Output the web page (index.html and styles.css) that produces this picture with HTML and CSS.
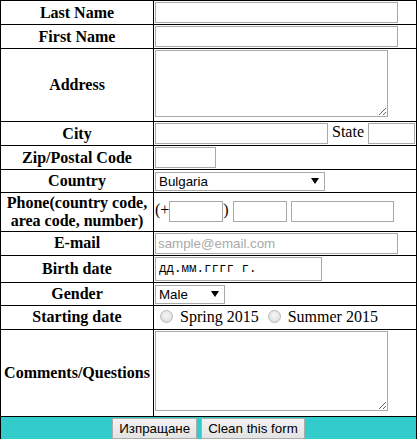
FILE: index.html
```html
<!DOCTYPE html>
<html lang="bg">
<head>
<meta charset="utf-8">
<title>Form</title>
<link rel="stylesheet" href="styles.css">
</head>
<body>
<form class="reg-form">
<table class="form-table">
  <tr class="row-24">
    <td class="label">Last Name</td>
    <td class="field"><input class="ctl w243" type="text"></td>
  </tr>
  <tr class="row-24">
    <td class="label">First Name</td>
    <td class="field"><input class="ctl w243" type="text"></td>
  </tr>
  <tr class="row-73">
    <td class="label">Address</td>
    <td class="field field-top"><textarea class="area h67"></textarea></td>
  </tr>
  <tr class="row-24">
    <td class="label">City</td>
    <td class="field"><input class="ctl w173" type="text"> State <input class="ctl w47" type="text"></td>
  </tr>
  <tr class="row-24">
    <td class="label">Zip/Postal Code</td>
    <td class="field"><input class="ctl w61" type="text"></td>
  </tr>
  <tr class="row-22">
    <td class="label">Country</td>
    <td class="field"><select class="sel w170"><option>Bulgaria</option></select></td>
  </tr>
  <tr class="row-39">
    <td class="label">Phone(country code, area code, number)</td>
    <td class="field">(+<input class="ctl w54" type="text">) <input class="ctl w54" type="text"> <input class="ctl w103" type="text"></td>
  </tr>
  <tr class="row-24">
    <td class="label">E-mail</td>
    <td class="field"><input class="ctl w243" type="email" placeholder="sample@email.com"></td>
  </tr>
  <tr class="row-27">
    <td class="label">Birth date</td>
    <td class="field"><input class="ctl date w167" type="text" value="дд.мм.гггг г."></td>
  </tr>
  <tr class="row-22">
    <td class="label">Gender</td>
    <td class="field"><select class="sel w70"><option>Male</option></select></td>
  </tr>
  <tr class="row-24">
    <td class="label">Starting date</td>
    <td class="field"><input class="radio" type="radio" name="start"> Spring 2015 <input class="radio" type="radio" name="start"> Summer 2015</td>
  </tr>
  <tr class="row-87">
    <td class="label">Comments/Questions</td>
    <td class="field field-top"><textarea class="area h80"></textarea></td>
  </tr>
  <tr class="row-24">
    <td class="actions" colspan="2"><button class="btn" type="submit">Изпращане</button> <button class="btn" type="reset">Clean this form</button></td>
  </tr>
</table>
</form>
</body>
</html>
```

FILE: styles.css
```css
html, body {
  margin: 0;
  padding: 0;
  background: #fff;
}

.reg-form {
  margin: 0;
}

.form-table {
  border-collapse: collapse;
  font-family: "Liberation Serif", "Times New Roman", serif;
  font-size: 16px;
  color: #000;
}

.form-table td {
  border: 1px solid #000;
  padding: 1px;
  vertical-align: middle;
}

.label {
  width: 150px;
  text-align: center;
  font-weight: bold;
  line-height: 18px;
}

.field {
  width: 260px;
  text-align: left;
  white-space: nowrap;
}

.form-table .field-top {
  vertical-align: top;
  line-height: 0;
}

.row-24 { height: 24px; }
.row-22 { height: 22px; }
.row-27 { height: 27px; }
.row-39 { height: 39px; }
.row-73 { height: 73px; }
.row-87 { height: 87px; }

.ctl {
  box-sizing: border-box;
  height: 21px;
  margin: 0;
  padding: 0 2px;
  border: 1px solid #a9a9a9;
  background: #fff;
  font-family: "Liberation Sans", Arial, sans-serif;
  font-size: 13.333px;
  color: #000;
  vertical-align: middle;
}

.ctl::placeholder {
  color: #a9a9a9;
}

.w243 { width: 243px; }
.w173 { width: 173px; }
.w47 { width: 47px; }
.w61 { width: 61px; }
.w54 { width: 54px; }
.w103 { width: 103px; }
.w167 { width: 167px; }
.w170 { width: 170px; }
.w70 { width: 70px; }

.date {
  height: 24px;
  padding: 0 3px;
  font-family: "Liberation Mono", "DejaVu Sans Mono", monospace;
  font-size: 12.5px;
}

.area {
  box-sizing: border-box;
  width: 233px;
  margin: 0;
  padding: 2px;
  border: 1px solid #a9a9a9;
  font-family: "Liberation Mono", monospace;
  font-size: 13.333px;
  line-height: normal;
  vertical-align: top;
}

.h67 { height: 67px; }
.h80 { height: 80px; }

.sel {
  box-sizing: border-box;
  height: 19px;
  margin: 0;
  padding: 0 0 0 3px;
  border: 1px solid #a9a9a9;
  border-radius: 0;
  -webkit-appearance: none;
  appearance: none;
  background: #fff url("data:image/svg+xml;utf8,<svg xmlns='http://www.w3.org/2000/svg' width='8' height='6'><path d='M0 0h8L4 6z' fill='black'/></svg>") no-repeat right 5px center;
  font-family: "Liberation Sans", Arial, sans-serif;
  font-size: 13.333px;
  color: #000;
  vertical-align: middle;
}

.radio {
  -webkit-appearance: none;
  appearance: none;
  box-sizing: border-box;
  width: 13px;
  height: 13px;
  margin: 0 3px 0 5px;
  border: 1px solid #b9b9b9;
  border-radius: 50%;
  background: radial-gradient(circle at 50% 40%, #f6f6f6 0%, #e4e4e4 60%, #d2d2d2 100%);
  vertical-align: -1px;
}

.actions {
  background: #33cccc;
  text-align: center;
}

.btn {
  box-sizing: border-box;
  height: 21px;
  margin: 0;
  padding: 0 6px;
  border: 1px solid #acacac;
  border-radius: 0;
  background: linear-gradient(#f2f2f2, #e3e3e3);
  font-family: "Liberation Sans", Arial, sans-serif;
  font-size: 13.333px;
  color: #000;
  vertical-align: middle;
}
```
